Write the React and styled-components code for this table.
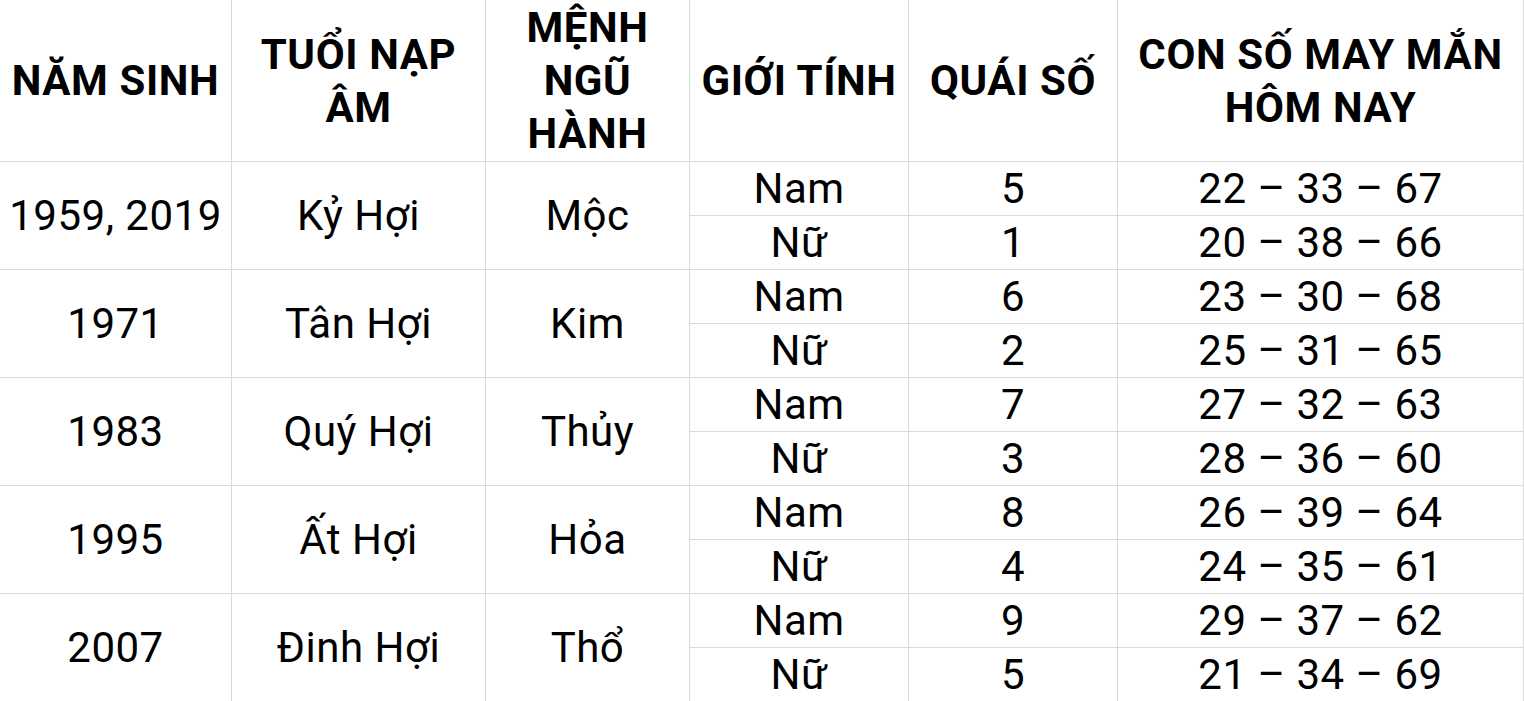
import React from "react";
import styled, { createGlobalStyle } from "styled-components";

const GlobalStyle = createGlobalStyle`
  html, body {
    margin: 0;
    padding: 0;
    background: #fff;
    overflow: hidden;
  }
  * {
    box-sizing: border-box;
  }
`;

const Table = styled.div`
  display: grid;
  grid-template-columns: 232px 254px 204px 219px 209px 406px;
  grid-template-rows: 162px;
  grid-auto-rows: 54px;
  width: 1524px;
  font-family: Roboto, "Noto Sans", Arial, sans-serif;
  color: #000;
`;

const Cell = styled.div`
  display: flex;
  align-items: center;
  justify-content: center;
  text-align: center;
  font-size: 42px;
  line-height: 53px;
  letter-spacing: ${({ $head }) => ($head ? "0.6px" : "0.5px")};
  font-weight: ${({ $head }) => ($head ? 700 : 400)};
  border-right: 1px solid #dadada;
  border-bottom: 1px solid #dadada;
  grid-row: ${({ $span }) => ($span ? `span ${$span}` : "auto")};
  padding: 0 2px;
  white-space: nowrap;
`;

const headers = [
  ["NĂM SINH"],
  ["TUỔI NẠP", "ÂM"],
  ["MỆNH", "NGŨ", "HÀNH"],
  ["GIỚI TÍNH"],
  ["QUÁI SỐ"],
  ["CON SỐ MAY MẮN", "HÔM NAY"],
];

const groups = [
  {
    year: "1959, 2019",
    age: "Kỷ Hợi",
    element: "Mộc",
    rows: [
      ["Nam", "5", "22 – 33 – 67"],
      ["Nữ", "1", "20 – 38 – 66"],
    ],
  },
  {
    year: "1971",
    age: "Tân Hợi",
    element: "Kim",
    rows: [
      ["Nam", "6", "23 – 30 – 68"],
      ["Nữ", "2", "25 – 31 – 65"],
    ],
  },
  {
    year: "1983",
    age: "Quý Hợi",
    element: "Thủy",
    rows: [
      ["Nam", "7", "27 – 32 – 63"],
      ["Nữ", "3", "28 – 36 – 60"],
    ],
  },
  {
    year: "1995",
    age: "Ất Hợi",
    element: "Hỏa",
    rows: [
      ["Nam", "8", "26 – 39 – 64"],
      ["Nữ", "4", "24 – 35 – 61"],
    ],
  },
  {
    year: "2007",
    age: "Đinh Hợi",
    element: "Thổ",
    rows: [
      ["Nam", "9", "29 – 37 – 62"],
      ["Nữ", "5", "21 – 34 – 69"],
    ],
  },
];

const App = () => {
  return (
    <>
      <GlobalStyle />
      <Table>
        {headers.map((lines, i) => (
          <Cell $head key={"h" + i}>
            <span>
              {lines.map((l, j) => (
                <React.Fragment key={j}>
                  {j > 0 && <br />}
                  {l}
                </React.Fragment>
              ))}
            </span>
          </Cell>
        ))}
        {groups.map((g) => (
          <React.Fragment key={g.year}>
            <Cell $span={2}>{g.year}</Cell>
            <Cell $span={2}>{g.age}</Cell>
            <Cell $span={2}>{g.element}</Cell>
            {g.rows.map((r, k) => (
              <React.Fragment key={k}>
                <Cell>{r[0]}</Cell>
                <Cell>{r[1]}</Cell>
                <Cell>{r[2]}</Cell>
              </React.Fragment>
            ))}
          </React.Fragment>
        ))}
      </Table>
    </>
  );
};

export default App;
